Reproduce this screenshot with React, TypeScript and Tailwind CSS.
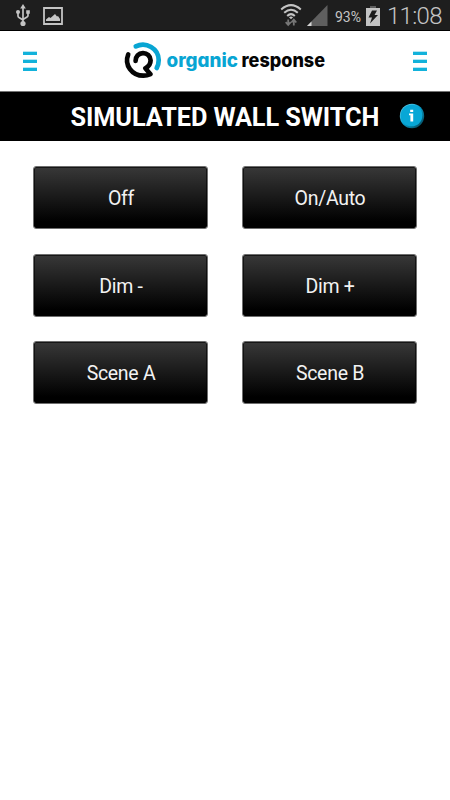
import React from "react"

interface WallButton {
  id: string
  label: string
}

const wallButtons: WallButton[] = [
  { id: "off", label: "Off" },
  { id: "on", label: "On/Auto" },
  { id: "dim-down", label: "Dim -" },
  { id: "dim-up", label: "Dim +" },
  { id: "scene-a", label: "Scene A" },
  { id: "scene-b", label: "Scene B" },
]

function UsbIcon() {
  return (
    <svg className="w-[14px] h-[23px]" viewBox="0 0 14 23" fill="none" stroke="#c4c4c4" strokeWidth="1.7">
      <path d="M7 4v15M2 9v3q0 1 1 1.6l4 2.4M12 9v2.500q0 1-1 1.600l-4 2.400" />
      <path d="M7 0l2.800 4.500H4.200z" fill="#c4c4c4" stroke="none" />
      <circle cx="7" cy="19.500" r="2.600" fill="#c4c4c4" stroke="none" />
      <circle cx="2" cy="8" r="2" fill="#c4c4c4" stroke="none" />
      <path d="M10.200 6.200h3.600v3.600h-3.600z" fill="#c4c4c4" stroke="none" />
    </svg>
  )
}

function PictureIcon() {
  return (
    <svg className="w-5 h-[18px]" viewBox="0 0 20 18">
      <path d="M1 1h18v16H1z" fill="none" stroke="#c4c4c4" strokeWidth="1.800" />
      <path d="M3 14v-1.500l3-2.500 1.500 1 4.500-4 2 2.500 1-.5 2 3v2z" fill="#c4c4c4" />
    </svg>
  )
}

function WifiIcon() {
  return (
    <svg className="w-[22px] h-[23px]" viewBox="0 0 22 23" fill="none">
      <g stroke="#c4c4c4" strokeWidth="2">
        <path d="M1.200 5.500Q11-3.200 20.800 5.500" />
        <path d="M4.200 8.800Q11 2.600 17.800 8.800" />
        <path d="M7.200 12Q11 8.300 14.800 12" />
      </g>
      <path d="M8.900 13.300Q11 11.500 13.100 13.300L11 15.300z" fill="#c4c4c4" />
      <path d="M8.200 15.500v5M5.700 18.200L8.200 21l2.500-2.800M13.800 21.500v-5M11.300 18.500L13.800 15.700l2.500 2.800" stroke="#777" strokeWidth="1.800" />
    </svg>
  )
}

function SignalIcon() {
  return (
    <svg className="w-[21px] h-[21px]" viewBox="0 0 21 21">
      <path d="M20.500 0v21H0z" fill="#5f5f5f" />
      <path d="M4.500 16.500V21H0z" fill="#d6d6d6" />
    </svg>
  )
}

function BatteryIcon() {
  return (
    <svg className="w-[14px] h-[20px]" viewBox="0 0 14 20">
      <path d="M4 0h6v2H4z" fill="#5f5f5f" />
      <path d="M0 2h14v18H0z" fill="#c4c4c4" />
      <path d="M6 4.500h5L8.500 9H12l-8 8.500 2-6H2.500z" fill="#1c1c1c" />
    </svg>
  )
}

function StatusBar() {
  return (
    <div className="h-[31px] bg-[#1e1e1e] border-b border-black flex items-center font-[Roboto,sans-serif] text-[#c4c4c4]">
      <div className="ml-4 pt-px flex items-center gap-[13px]">
        <UsbIcon />
        <PictureIcon />
      </div>
      <div className="ml-auto flex items-center">
        <WifiIcon />
        <div className="ml-[5px]">
          <SignalIcon />
        </div>
        <span className="ml-[7px] w-[28px] pt-[3px] text-[14px] leading-none">93%</span>
        <div className="ml-[3px] pt-px">
          <BatteryIcon />
        </div>
        <span className="ml-[7px] mr-1 w-[59px] pt-px whitespace-nowrap text-[24px] leading-none font-light tracking-[-0.7px]">
          11:08
        </span>
      </div>
    </div>
  )
}

function MenuButton() {
  return (
    <button className="w-[14px] flex flex-col gap-[5px]" aria-label="Menu">
      <span className="block h-[3px] w-full bg-[#12b2db] shadow-[0_-1px_0_#b5e6f3]" />
      <span className="block h-[3px] w-full bg-[#12b2db] shadow-[0_-1px_0_#b5e6f3]" />
      <span className="block h-[3px] w-full bg-[#12b2db] shadow-[0_-1px_0_#b5e6f3]" />
    </button>
  )
}

function Logo() {
  return (
    <svg className="w-[202px] h-10 overflow-visible" viewBox="124 42 202 40">
      <g fill="none" strokeWidth="4.700" strokeLinecap="round" strokeLinejoin="round">
        <path d="M135.800 47.400C146 42.100 158.700 49.500 158.700 61Q158.700 65.500 156.700 69" stroke="#08a5d3" />
        <path
          d="M128.200 55.500C124 66 132 76.700 143.500 76.700Q147 76.700 150.500 75.200L145.300 69.300C149 67.500 150.600 64.500 150.600 61.300A7.500 7.500 0 0 0 135.600 61.800"
          stroke="#050505"
        />
      </g>
      <text
        y="68"
        className="font-[Inter,sans-serif] text-[19px] font-extrabold"
        style={{ fontFeatureSettings: '"cv11"' }}
      >
        <tspan x="166.500" textLength="71.500" lengthAdjust="spacingAndGlyphs" fill="#08a5d3">organic</tspan>
        <tspan x="241.500" textLength="83.500" lengthAdjust="spacingAndGlyphs" fill="#050505">response</tspan>
      </text>
    </svg>
  )
}

function InfoIcon() {
  return (
    <svg className="w-[26px] h-[26px]" viewBox="0 0 26 26">
      <defs>
        <linearGradient id="info-rim" x1="0" y1="0" x2="1" y2="1">
          <stop offset="0" stopColor="#8adcf3" />
          <stop offset=".45" stopColor="#08a5d3" />
          <stop offset="1" stopColor="#053a4a" />
        </linearGradient>
      </defs>
      <circle cx="13" cy="13" r="12.200" fill="url(#info-rim)" />
      <circle cx="12.500" cy="12.500" r="10.800" fill="#08a7d6" />
      <path d="M11.200 6.700h3v2.400h-3zM10 10.500h4.200v8h-2.800v-6.300H10z" fill="#fff" />
    </svg>
  )
}

export default function App() {
  return (
    <div className="w-[450px] h-[800px] bg-white overflow-hidden">
      <StatusBar />

      {/* Header */}
      <header className="h-[61px] px-[23px] flex items-center justify-between border-b border-[#747474]">
        <MenuButton />
        <Logo />
        <MenuButton />
      </header>

      {/* Title */}
      <div className="h-[49px] pl-[70.5px] pr-[25px] bg-black flex items-center justify-between">
        <h1 className="pt-0.5 font-[Roboto,sans-serif] text-[25.3px] leading-none font-bold tracking-[-0.09px] text-white whitespace-nowrap">
          SIMULATED WALL SWITCH
        </h1>
        <div className="pb-[2px]">
          <InfoIcon />
        </div>
      </div>

      {/* Wall switch buttons */}
      <main className="pt-[25px] px-[33px] grid grid-cols-[175px_175px] justify-between gap-y-[24.5px]">
        {wallButtons.map((button) => (
          <button
            key={button.id}
            className="h-[63px] pt-[3px] pl-px rounded-[3px] border border-[#6e6e6e] bg-linear-to-b/srgb from-[#383838] to-black to-90% bg-clip-padding shadow-[inset_0_0_0_1px_rgba(0,0,0,0.6)] font-[Roboto,sans-serif] text-[19.5px] tracking-[-0.3px] text-[#f2f2f2]"
          >
            {button.label}
          </button>
        ))}
      </main>
    </div>
  )
}
